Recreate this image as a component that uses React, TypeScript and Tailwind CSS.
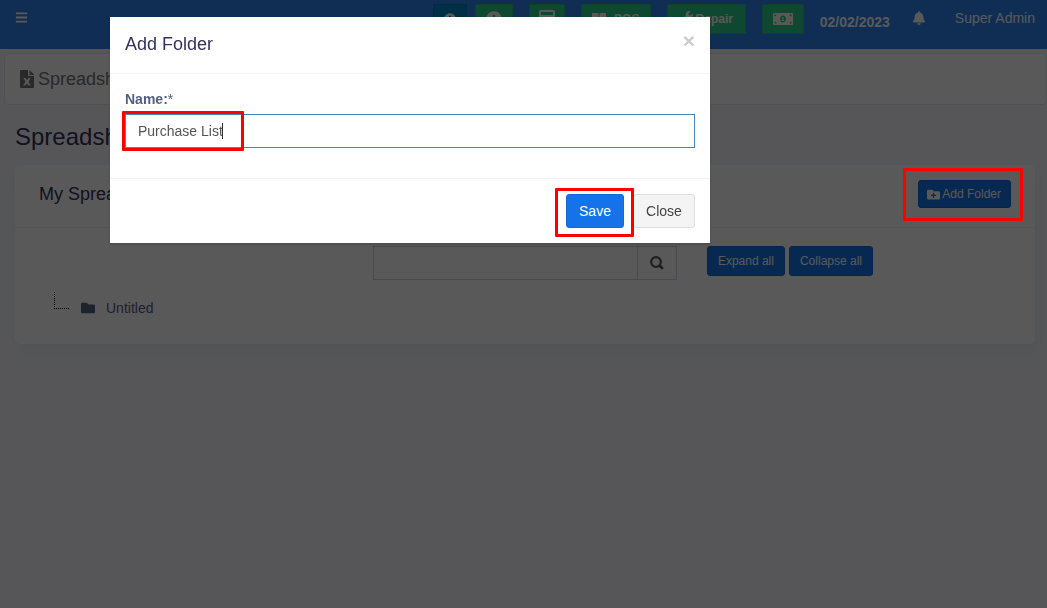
import type { ReactNode } from "react";
import {
  FaBars,
  FaBell,
  FaFolder,
  FaFolderPlus,
  FaInfoCircle,
  FaMoneyBillAlt,
  FaPlusCircle,
  FaThLarge,
  FaWrench,
} from "react-icons/fa";

const toolClass =
  "flex h-[30px] items-center justify-center gap-2 border border-[#28b97b] bg-[#2dce89] text-xs font-bold text-white";

function CalculatorIcon() {
  return (
    <svg viewBox="0 0 16 18" className="h-[18px] w-4" fill="none" stroke="currentColor" strokeWidth="2">
      <rect x="1" y="1" width="14" height="16" rx="1" />
      <path d="M1 6h14M5 10v1M8 10v1M11 10v1M5 13v1M8 13v1M11 13v1" />
    </svg>
  );
}

function ExcelIcon() {
  return (
    <svg viewBox="0 0 14 18" className="h-[18px] w-[14px]" fill="currentColor">
      <path
        fillRule="evenodd"
        d="M1 0h7v5q0 1 1 1h5v11q0 1-1 1H1q-1 0-1-1V1q0-1 1-1zM3.4 8l2.2 3.7L3.2 15.500h2.300L7 13.200l1.500 2.300h2.300L8.400 11.700 10.600 8H8.400L7 10.200 5.600 8z"
      />
      <path d="M9.500 0L14 4.500V5H9.500z" />
    </svg>
  );
}

function SearchIcon() {
  return (
    <svg viewBox="0 0 14 14" className="size-[14px]" fill="none" stroke="currentColor">
      <circle cx="6" cy="6" r="4.800" strokeWidth="2.200" />
      <path d="M9.500 9.500l3.400 3.400" strokeWidth="2.600" />
    </svg>
  );
}

function Highlight({ className }: { className: string }) {
  return (
    <span
      aria-hidden="true"
      className={`pointer-events-none absolute z-40 rounded-[1px] border-3 border-[#ff0000] ${className}`}
    />
  );
}

function SmallButton({ children }: { children: ReactNode }) {
  return (
    <button type="button" className="h-[30px] rounded-[3px] border border-[#1269db] bg-[#1572e8] px-[10px] text-xs text-white">
      {children}
    </button>
  );
}

function TopBar() {
  return (
    <header className="flex h-[49px] items-start bg-[#2e82f0] text-white">
      <button type="button" aria-label="Toggle menu" className="ml-[15px] mt-[11px]">
        <FaBars className="size-[13px]" />
      </button>
      <div className="ml-auto flex items-start pt-1">
        <button type="button" aria-label="Add" className="flex h-[30px] w-[34px] items-center justify-center border border-[#007dbb] bg-[#0088c8] text-white">
          <FaPlusCircle className="size-3" />
        </button>
        <button type="button" aria-label="Register details" className={`${toolClass} ml-2 w-[38px]`}>
          <FaInfoCircle className="size-4" />
        </button>
        <button type="button" aria-label="Calculator" className={`${toolClass} ml-4 w-9`}>
          <CalculatorIcon />
        </button>
        <button type="button" className={`${toolClass} ml-4 w-[70px]`}>
          <FaThLarge className="size-[14px]" /> POS
        </button>
        <button type="button" className={`${toolClass} ml-4 w-[79px] gap-[3px]`}>
          <FaWrench className="mb-1 size-[13px]" /> Repair
        </button>
        <button type="button" aria-label="Today's profit" className={`${toolClass} ml-4 w-[42px]`}>
          <FaMoneyBillAlt className="size-5" />
        </button>
        <time className="ml-4 mt-2 text-sm font-bold">02/02/2023</time>
        <button type="button" aria-label="Notifications" className="ml-[22px] mt-[7px]">
          <FaBell className="size-[14px]" />
        </button>
        <a href="#profile" className="ml-[29px] mr-3 mt-1 text-sm">Super Admin</a>
      </div>
    </header>
  );
}

function FolderCard() {
  return (
    <section className="mt-3 mr-3 ml-[15px] rounded-[5px] bg-white shadow-[2px_6px_15px_0_rgba(69,65,78,0.05)]">
      <div className="flex h-[63px] items-start justify-between border-b border-[#f0f1f1] px-6 pt-[15px]">
        <h2 className="text-lg text-[#32325d]">My Spreadsheets</h2>
        <div className="relative">
          <button
            type="button"
            className="flex h-7 items-center gap-[2px] rounded-[3px] border border-[#1269db] bg-[#1572e8] pr-[9px] pl-2 text-xs text-white"
          >
            <FaFolderPlus className="size-[13px]" /> Add Folder
          </button>
          <Highlight className="-top-3 -right-3 -bottom-[13px] -left-[15px]" />
        </div>
      </div>
      <div className="flex items-start justify-end pt-[18px] pr-[162px]">
        <form role="search" className="flex h-[34px] w-[304px] border border-[#d2d2de]">
          <input aria-label="Search folders" className="min-w-0 flex-1 px-3 text-sm outline-none" />
          <button type="button" aria-label="Search" className="flex w-[39px] items-center justify-center border-l border-[#d2d2de] text-[#555]">
            <SearchIcon />
          </button>
        </form>
        <div className="ml-[30px] flex gap-1">
          <SmallButton>Expand all</SmallButton>
          <SmallButton>Collapse all</SmallButton>
        </div>
      </div>
      <ul className="px-[39px] pt-3 pb-[26px]">
        <li className="flex items-start">
          <span className="h-[17px] w-[15px] border-b border-l border-dotted border-black" />
          <a href="#untitled" className="ml-3 flex items-center gap-[11px] pt-[6px] text-sm text-[#575e84]">
            <FaFolder className="size-[14px]" /> Untitled
          </a>
        </li>
      </ul>
    </section>
  );
}

function AddFolderModal() {
  return (
    <div className="fixed inset-0 z-30 flex items-start justify-center bg-black/65">
      <div
        role="dialog"
        aria-modal="true"
        aria-labelledby="modal-title"
        className="mt-[17px] mr-[227px] w-[600px] max-w-full bg-white shadow-[0_2px_3px_rgba(0,0,0,0.15)]"
      >
        <div className="flex h-[57px] items-start justify-between border-b border-[#f4f4f4] px-[15px] pt-[13px]">
          <h4 id="modal-title" className="text-lg text-[#32325d]">Add Folder</h4>
          <button type="button" aria-label="Close" className="text-[21px] leading-[21px] font-bold text-[#ccc]">
            &times;
          </button>
        </div>
        <div className="px-[15px] pt-[15px] pb-[30px]">
          <label htmlFor="folder-name" className="block text-sm font-bold text-[#525f7f]">
            Name:<span className="font-normal">*</span>
          </label>
          <div className="relative mt-[5px]">
            <input
              id="folder-name"
              defaultValue="Purchase List"
              className="block h-[34px] w-full border border-[#3c8dbc] px-3 text-sm text-[#555] outline-none"
            />
            <span aria-hidden="true" className="absolute top-[9px] left-[97px] h-4 w-px bg-[#333]" />
            <Highlight className="-top-[3px] -bottom-[3px] -left-[3px] w-[122px]" />
          </div>
        </div>
        <div className="flex h-[65px] items-start justify-end border-t border-[#f4f4f4] px-[15px] pt-[15px] text-sm">
          <div className="relative">
            <button type="button" className="h-[34px] w-[58px] rounded-[3px] border border-[#1269db] bg-[#1572e8] text-white">
              Save
            </button>
            <Highlight className="-top-[6px] -right-[10px] -bottom-[9px] -left-[11px]" />
          </div>
          <button type="button" className="ml-[9px] h-[34px] w-[62px] rounded-[3px] border border-[#ddd] bg-[#f4f4f4] text-[#444]">
            Close
          </button>
        </div>
      </div>
    </div>
  );
}

export default function App() {
  return (
    <div className="min-h-screen bg-[#f5f7fd] font-['Liberation_Sans',Arial,sans-serif]">
      <TopBar />
      <nav className="mt-1 ml-1 flex h-[52px] items-center gap-1 rounded-[4px] border border-[#e7e7e7] bg-white px-[15px] text-lg text-[#777]">
        <ExcelIcon />
        <a href="#spreadsheet">Spreadsheet</a>
      </nav>
      <main>
        <h1 className="mt-4 ml-[15px] text-2xl text-[#32325d]">Spreadsheet</h1>
        <FolderCard />
      </main>
      <AddFolderModal />
    </div>
  );
}
